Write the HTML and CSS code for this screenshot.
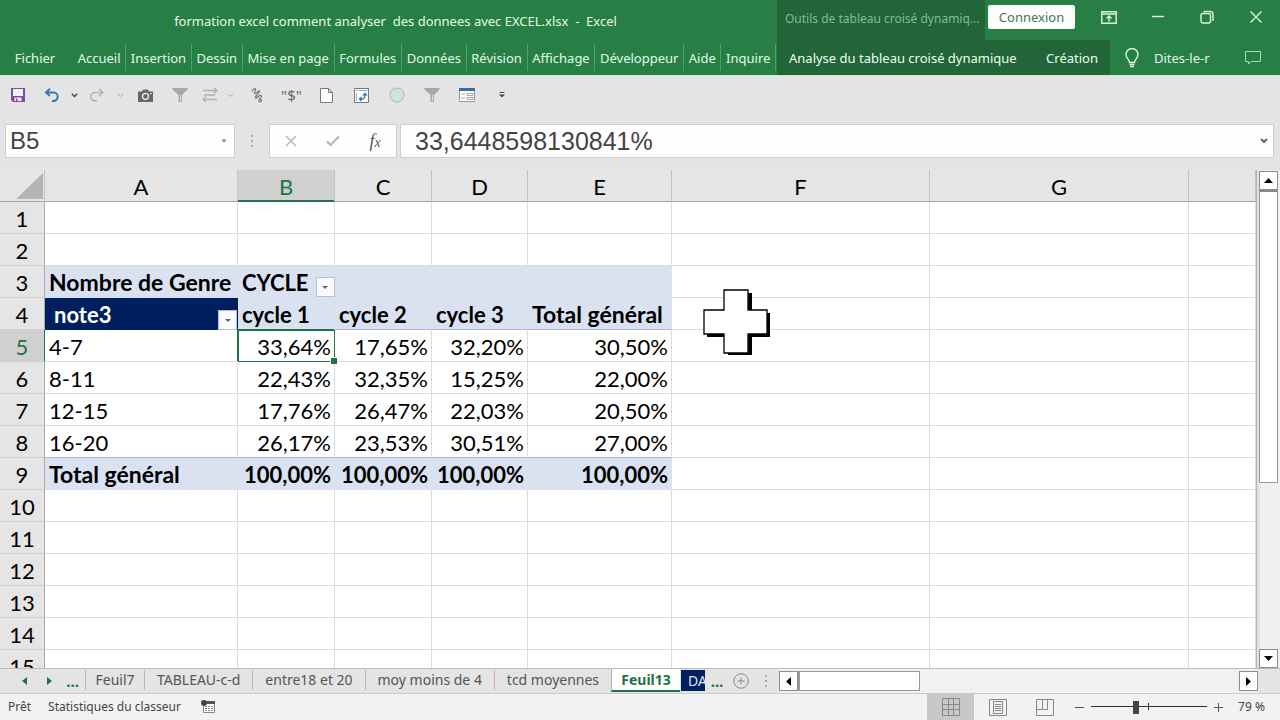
FILE: index.html
```
<!DOCTYPE html>
<html lang="fr">
<head>
<meta charset="utf-8">
<meta name="viewport" content="width=device-width, initial-scale=1">
<title>formation excel comment analyser des donnees avec EXCEL.xlsx - Excel</title>
<link rel="stylesheet" href="styles.css">
</head>
<body>
<header class="titlebar">
  <h1 class="doc-title">formation excel comment analyser&nbsp; des donnees avec EXCEL.xlsx&nbsp; -&nbsp; Excel</h1>
  <div class="context-title">Outils de tableau croisé dynamiq...</div>
  <div class="window-tools">
    <button class="signin">Connexion</button>
    <button class="win-btn" aria-label="Options d'affichage du ruban"><svg width="16" height="13" viewBox="0 0 16 13"><path d="M.8.800h14.400v11.400H.8zM.8 3h14.400M8 10.500V5.500M5.500 7.500 8 5l2.500 2.500"/></svg></button>
    <button class="win-btn" aria-label="Réduire"><svg width="14" height="14" viewBox="0 0 14 14"><path d="M1 6.500h12"/></svg></button>
    <button class="win-btn" aria-label="Restaurer"><svg width="14" height="14" viewBox="0 0 14 14"><rect x="1" y="3.500" width="9.500" height="9.500" rx="2"/><path d="M3.500 1.500h6.500q3 0 3 3V11"/></svg></button>
    <button class="win-btn" aria-label="Fermer"><svg width="14" height="14" viewBox="0 0 14 14"><path d="M1.500 1.500l11 11M12.500 1.500l-11 11"/></svg></button>
  </div>
</header>
<nav class="ribbon" aria-label="Ruban">
  <button class="file-tab">Fichier</button>
  <div class="tabs">
    <button class="tab">Accueil</button><button class="tab">Insertion</button><button class="tab">Dessin</button><button class="tab">Mise en page</button><button class="tab">Formules</button><button class="tab">Données</button><button class="tab">Révision</button><button class="tab">Affichage</button><button class="tab">Développeur</button><button class="tab">Aide</button><button class="tab">Inquire</button>
  </div>
  <div class="context-tabs"><button>Analyse du tableau croisé dynamique</button><button>Création</button></div>
  <div class="ribbon-tools">
    <button class="tell-me"><svg width="16" height="20" viewBox="0 0 16 20"><path d="M5.500 14.500c0-3-3.500-4-3.500-8a6 6 0 0 1 12 0c0 4-3.500 5-3.500 8zM5.500 16.500h5M6 18.500h4"/></svg><span>Dites-le-r</span></button>
    <button class="comment" aria-label="Commentaires"><svg width="16" height="14" viewBox="0 0 16 14"><path d="M.5.5h15v10H6.500L3.500 13v-2.500h-3z"/></svg></button>
  </div>
</nav>
<div class="quick" role="toolbar" aria-label="Accès rapide">
  <button class="q save" aria-label="Enregistrer"><svg width="14" height="14" viewBox="0 0 14 14"><path fill="#7a4fa0" d="M0 0h14v14H2L0 12z"/><path fill="#f4f0f8" d="M2 1h10v7H2zM3.500 9.500h7V13h-7z"/><path fill="#7a4fa0" d="M5 10.500h1.500V13H5z"/></svg></button>
  <button class="q undo" aria-label="Annuler"><svg width="16" height="14" viewBox="0 0 16 14"><path fill="none" stroke="#3c78b4" stroke-width="2" d="M6 .8 2 4.500 6 8M2 4.500h7.500a4.200 4.200 0 0 1 0 8.400H8"/></svg></button>
  <button class="q drop" aria-label="Liste annuler"><svg width="7" height="5" viewBox="0 0 7 5"><path fill="none" stroke="#444" stroke-width="1.300" d="M.8.800 3.500 3.500 6.200.8"/></svg></button>
  <button class="q redo" aria-label="Rétablir"><svg width="16" height="14" viewBox="0 0 16 14"><path fill="none" stroke="#b5b5b5" stroke-width="1.600" d="M10 .8 14 4.500 10 8M14 4.500H6a4.200 4.200 0 0 0 0 8.400h2"/></svg></button>
  <button class="q drop" aria-label="Liste rétablir"><svg width="7" height="5" viewBox="0 0 7 5"><path fill="none" stroke="#aaa" d="M.8.800 3.500 3.500 6.200.8"/></svg></button>
  <button class="q camera" aria-label="Appareil photo"><svg width="15" height="13" viewBox="0 0 15 13"><path fill="#666" d="M0 2.500h4L5 .5h5l1 2h4V13H0z"/><circle cx="7.500" cy="7.300" r="3" fill="#666" stroke="#eee" stroke-width="1.300"/><path fill="#eee" d="M12 4h1.500v1.200H12z"/></svg></button>
  <button class="q funnel" aria-label="Filtrer"><svg width="16" height="14" viewBox="0 0 16 14"><path fill="#a8a8a8" d="M.5 0h15v1.500L10 7v7H6.500V7L.5 1.500z"/><path fill="#ddd" d="M8 7h1v6H8z"/></svg></button>
  <button class="q swap" aria-label="Échanger"><svg width="18" height="16" viewBox="0 0 18 16"><path fill="none" stroke="#b0b0b0" stroke-width="1.300" d="M2 3.500h14M13 .8l3 2.700-3 2.700M3 8h11M16 12.500H2M5 9.800l-3 2.700 3 2.700"/></svg></button>
  <button class="q drop" aria-label="Liste échanger"><svg width="7" height="5" viewBox="0 0 7 5"><path fill="none" stroke="#aaa" d="M.8.800 3.500 3.500 6.200.8"/></svg></button>
  <button class="q draw" aria-label="Dessiner"><svg width="12" height="16" viewBox="0 0 12 16"><path fill="none" stroke="#777" stroke-width="1.200" d="M1 4.500C2 2 4.500.5 4.500 2.500S2.500 6 4 6.500 7.500 3 8.500 4 5 8.500 4.500 10s1.500 1 3-.5 3-1.500 3 0-3 3-2.500 4.500 2.500.5 2.500-.5-1.500-1.500-3-1"/></svg></button>
  <button class="q money" aria-label="Format monétaire">"$"</button>
  <button class="q" aria-label="Nouveau"><svg width="13" height="15" viewBox="0 0 13 15"><path fill="#fff" stroke="#777" d="M.5.500h8l4 4v10H.5zM8.500.5v4h4"/></svg></button>
  <button class="q" aria-label="Actualiser le tableau"><svg width="15" height="15" viewBox="0 0 15 15"><path fill="#fff" stroke="#777" d="M.5.500h14v14H.5z"/><path fill="#9aa" d="M2 2h2v1H2zM5 2h8v1H5zM2 5h1v8H2z"/><path fill="none" stroke="#3c78b4" stroke-width="1.400" d="M5.500 11h3q2.500 0 2.500-5M9 7.500l2-2 2 2M7.500 9l-2 2 2 2"/></svg></button>
  <button class="q" aria-label="Ellipse"><svg width="16" height="16" viewBox="0 0 16 16"><circle cx="8" cy="8" r="7" fill="#cfe3da" stroke="#9fbfb2"/></svg></button>
  <button class="q" aria-label="Effacer le filtre"><svg width="16" height="14" viewBox="0 0 16 14"><path fill="#a8a8a8" d="M.5 0h15v1.500L10 7v7H6.500V7L.5 1.500z"/><path fill="#ddd" d="M8 7h1v6H8z"/></svg></button>
  <button class="q" aria-label="Formulaire"><svg width="16" height="14" viewBox="0 0 16 14"><path fill="#fff" stroke="#999" d="M.5.500h15v13H.5z"/><path fill="#3c6ea5" d="M0 0h16v3H0z"/><path fill="none" stroke="#aaa" d="M2 6h4M8 5.500h6v2H8zM2 10h4M8 9.500h6v2H8z"/></svg></button>
  <button class="q" aria-label="Personnaliser"><svg width="6" height="6" viewBox="0 0 6 6"><path fill="#444" d="M.5 0h5v1h-5zM0 2.500h6L3 5.500z"/></svg></button>
</div>
<div class="formula-row">
  <div class="name-box"><input value="B5" aria-label="Zone Nom"><svg width="6" height="4" viewBox="0 0 6 4"><path fill="#777" d="M.5.500h5L3 3.500z"/></svg></div>
  <svg class="grip" width="4" height="14" viewBox="0 0 4 14"><path fill="#aaa" d="M1 1h2v2H1zM1 6h2v2H1zM1 11h2v2H1z"/></svg>
  <div class="fx-box">
    <button aria-label="Annuler la saisie"><svg width="12" height="12" viewBox="0 0 12 12"><path fill="none" stroke="#b8b8b8" stroke-width="1.500" d="M1 1l10 10M11 1 1 11"/></svg></button>
    <button aria-label="Entrer"><svg width="14" height="12" viewBox="0 0 14 12"><path fill="none" stroke="#b8b8b8" stroke-width="2.200" d="M1 6.500 4.500 10 13 1.500"/></svg></button>
    <button class="fx" aria-label="Insérer une fonction">f<small>x</small></button>
  </div>
  <div class="formula-box"><input value="33,6448598130841%" aria-label="Barre de formule"><button aria-label="Développer"><svg width="8" height="6" viewBox="0 0 8 6"><path fill="none" stroke="#666" stroke-width="2" d="M1 1l3 3 3-3"/></svg></button></div>
</div>
<main class="workbook">
  <div class="sheet">
    <table class="grid">
      <colgroup><col class="c-num"><col class="c-a"><col class="c-b"><col class="c-b"><col class="c-d"><col class="c-e"><col class="c-f"><col class="c-g"><col></colgroup>
      <thead><tr><th class="corner" aria-label="Tout sélectionner"><svg width="27" height="26" viewBox="0 0 27 26"><path fill="#b4b4b4" d="M27 0v26H0z"/></svg></th><th>A</th><th class="on">B</th><th>C</th><th>D</th><th>E</th><th>F</th><th>G</th><th></th></tr></thead>
      <tbody>
        <tr><th>1</th><td></td><td></td><td></td><td></td><td></td><td></td><td></td><td></td></tr>
        <tr><th>2</th><td></td><td></td><td></td><td></td><td></td><td></td><td></td><td></td></tr>
        <tr class="band"><th>3</th><td class="p label">Nombre de Genre</td><td class="p" colspan="2"><span class="with-filter">CYCLE<button class="filter cycle" aria-label="Filtrer CYCLE"></button></span></td><td class="p"></td><td class="p"></td><td></td><td></td><td></td></tr>
        <tr class="band rule"><th>4</th><td class="p navy">note3<button class="filter note" aria-label="Filtrer note3"></button></td><td class="p">cycle 1</td><td class="p">cycle 2</td><td class="p">cycle 3</td><td class="p label">Total général</td><td></td><td></td><td></td></tr>
        <tr><th class="on">5</th><td>4-7</td><td class="n active">33,64%</td><td class="n">17,65%</td><td class="n">32,20%</td><td class="n">30,50%</td><td></td><td></td><td></td></tr>
        <tr><th>6</th><td>8-11</td><td class="n">22,43%</td><td class="n">32,35%</td><td class="n">15,25%</td><td class="n">22,00%</td><td></td><td></td><td></td></tr>
        <tr><th>7</th><td>12-15</td><td class="n">17,76%</td><td class="n">26,47%</td><td class="n">22,03%</td><td class="n">20,50%</td><td></td><td></td><td></td></tr>
        <tr class="last"><th>8</th><td>16-20</td><td class="n">26,17%</td><td class="n">23,53%</td><td class="n">30,51%</td><td class="n">27,00%</td><td></td><td></td><td></td></tr>
        <tr class="band"><th>9</th><td class="p label">Total général</td><td class="p n">100,00%</td><td class="p n">100,00%</td><td class="p n">100,00%</td><td class="p n">100,00%</td><td></td><td></td><td></td></tr>
        <tr><th>10</th><td></td><td></td><td></td><td></td><td></td><td></td><td></td><td></td></tr>
        <tr><th>11</th><td></td><td></td><td></td><td></td><td></td><td></td><td></td><td></td></tr>
        <tr><th>12</th><td></td><td></td><td></td><td></td><td></td><td></td><td></td><td></td></tr>
        <tr><th>13</th><td></td><td></td><td></td><td></td><td></td><td></td><td></td><td></td></tr>
        <tr><th>14</th><td></td><td></td><td></td><td></td><td></td><td></td><td></td><td></td></tr>
        <tr><th>15</th><td></td><td></td><td></td><td></td><td></td><td></td><td></td><td></td></tr>
      </tbody>
    </table>
    <svg class="pointer" width="68" height="68" viewBox="0 0 68 68"><path fill="#000" d="M25 4h24v20h18v24H49v18H25V48H4V24h21z"/><path fill="#fff" stroke="#000" stroke-width="1.300" d="M21 1h24v20h19v24H45v19H21V45H1V21h20z"/></svg>
  </div>
  <div class="vscroll">
    <button aria-label="Défiler vers le haut"><svg width="9" height="5" viewBox="0 0 9 5"><path d="M4.500 0 9 5H0z"/></svg></button>
    <div class="vthumb"></div>
    <button class="down" aria-label="Défiler vers le bas"><svg width="9" height="5" viewBox="0 0 9 5"><path d="M4.500 5 9 0H0z"/></svg></button>
  </div>
</main>
<div class="sheetbar">
  <div class="sheet-nav">
    <button aria-label="Feuille précédente"><svg width="5" height="8" viewBox="0 0 5 8"><path d="M5 0v8L0 4z"/></svg></button>
    <button aria-label="Feuille suivante"><svg width="5" height="8" viewBox="0 0 5 8"><path d="M0 0v8l5-4z"/></svg></button>
    <button class="dots">...</button>
  </div>
  <div class="sheet-tabs">
    <button class="short">Feuil7</button><button>TABLEAU-c-d</button><button>entre18 et 20</button><button>moy moins de 4</button><button>tcd moyennes</button><button class="current">Feuil13</button><button class="cut">DA</button>
  </div>
  <button class="dots more">...</button>
  <button class="add" aria-label="Nouvelle feuille"><svg width="16" height="16" viewBox="0 0 16 16"><path fill="none" stroke="#888" d="M8 .8a7.200 7.200 0 1 0 .1 0M8 4.500v7M4.500 8h7"/></svg></button>
  <svg class="grip" width="4" height="14" viewBox="0 0 4 14"><path fill="#aaa" d="M1 1h2v2H1zM1 6h2v2H1zM1 11h2v2H1z"/></svg>
  <div class="hscroll">
    <button aria-label="Défiler à gauche"><svg width="5" height="9" viewBox="0 0 5 9"><path d="M5 0v9L0 4.500z"/></svg></button>
    <div class="hthumb"></div>
    <button class="right" aria-label="Défiler à droite"><svg width="5" height="9" viewBox="0 0 5 9"><path d="M0 0v9l5-4.500z"/></svg></button>
  </div>
</div>
<footer class="status">
  <span>Prêt</span>
  <button class="stats">Statistiques du classeur</button>
  <button class="macro" aria-label="Enregistrer une macro"><svg width="14" height="14" viewBox="0 0 14 14"><path fill="#fff" stroke="#888" d="M2.500 2.500h11v10h-11z"/><path fill="#555" d="M5 1h9v3H5z"/><path fill="none" stroke="#888" d="M4 6.500h8M4 8.500h8M4 10.500h8" stroke-dasharray="2 1"/><circle cx="3" cy="3" r="3" fill="#444"/></svg></button>
  <div class="views">
    <button class="view on" aria-label="Normal"><svg width="18" height="18" viewBox="0 0 18 18"><path d="M.5.500h17v17H.5zM6.500.500v17M11.500.500v17M.5 6.500h17M.5 11.500h17"/></svg></button>
    <button class="view" aria-label="Mise en page"><svg width="18" height="17" viewBox="0 0 18 17"><path d="M.5.500h17v16H.5zM4.500 2.500h9v12h-9zM6 5.500h6M6 7.500h6M6 9.500h6M6 11.500h6"/></svg></button>
    <button class="view" aria-label="Aperçu des sauts de page"><svg width="18" height="17" viewBox="0 0 18 17"><path d="M.5.500h17v16H.5zM.5 10.500h11V.500M6.500.500v10"/></svg></button>
  </div>
  <div class="zoom">
    <button aria-label="Zoom arrière"><svg width="9" height="9" viewBox="0 0 9 9"><path d="M0 4.500h9"/></svg></button>
    <div class="slider"><input type="range" min="0" max="100" value="38" aria-label="Zoom"></div>
    <button aria-label="Zoom avant"><svg width="9" height="9" viewBox="0 0 9 9"><path d="M0 4.500h9M4.500 0v9"/></svg></button>
    <button class="percent">79 %</button>
  </div>
</footer>
</body>
</html>
```
FILE: styles.css
```
* { box-sizing: border-box; }
body {
  margin: 0;
  height: 100vh;
  display: flex;
  flex-direction: column;
  overflow: hidden;
  background: #e4e4e4;
  color: #333;
  font: 13px/20px "Noto Sans", "Open Sans", sans-serif;
}
button, input { font: inherit; color: inherit; background: none; border: 0; padding: 0; margin: 0; }
button { display: flex; align-items: center; justify-content: center; white-space: nowrap; flex: none; }
input { min-width: 0; outline: 0; }
svg { display: block; flex: none; }

/* Title bar and ribbon */
.titlebar, .ribbon { display: flex; flex: none; background: #287f46; color: #e2fae6; }
.titlebar { height: 40px; }
.doc-title { flex: 1; margin: 0; padding: 11px 0 0 14px; font-size: 13px; font-weight: 400; text-align: center; white-space: nowrap; }
.context-title { width: 208px; padding: 9px 0 0 8px; background: #216538; color: #86bb93; font-size: 12px; white-space: nowrap; overflow: hidden; }
.window-tools { width: 295px; display: flex; align-items: flex-start; padding: 5px 0 0 3px; }
.signin { width: 87px; height: 24px; border-radius: 2px; background: #fdfffd; color: #3f7a57; }
.win-btn { width: 49px; height: 24px; }
.signin + .win-btn { margin-left: 9px; }
.win-btn svg, .ribbon-tools svg { fill: none; stroke: #d8f7de; stroke-width: 1.4; }
.ribbon-tools .comment svg { stroke: #a5dcb2; stroke-width: 1; }
.ribbon { height: 36px; border-bottom: 1px solid #c9ecd2; }
.file-tab { width: 70px; }
.tabs { flex: 1; display: flex; padding: 4px 1px 4px 0; }
.tab { flex: 1 1 auto; border-right: 1px solid #4fa168; }
.tab:first-child { padding-left: 3px; }
.context-tabs { width: 333px; display: flex; justify-content: space-between; padding: 0 12px 0 12px; background: #216538; color: #f0fff2; }
.ribbon-tools { width: 170px; display: flex; justify-content: space-between; padding: 0 19px 0 14px; }
.tell-me { gap: 14px; }

/* Quick access toolbar */
.quick { flex: none; display: flex; align-items: center; height: 38px; padding-left: 6px; }
.q { width: 35px; height: 24px; }
.save { width: 24px; }
.undo { width: 36px; margin-left: 4px; }
.drop { width: 8px; }
.redo { width: 38px; }
.camera { width: 42px; }
.funnel { width: 28px; }
.swap { width: 32px; }
.draw { margin-left: 5px; }
.money { font-size: 15px; color: #666; }

/* Formula bar */
.formula-row { flex: none; display: flex; align-items: center; height: 56px; padding: 0 6px 2px 5px; }
.name-box, .fx-box, .formula-box { display: flex; align-items: center; height: 34px; background: #fefefe; border: 1px solid #cfcfcf; }
.name-box { width: 230px; padding: 0 7px 0 4px; }
.name-box input, .formula-box input { flex: 1; height: 32px; font: 25px/32px "Liberation Sans", Arial, sans-serif; color: #444; }
.name-box input { font-size: 24px; }
.formula-row .grip { margin: 0 15px; }
.fx-box { width: 128px; justify-content: space-around; margin-right: 3px; }
.fx-box button { width: 30px; height: 30px; }
.fx { font: italic 18px/24px "Liberation Serif", serif; color: #555; }
.fx small { font-size: 14px; padding-top: 4px; }
.formula-box { flex: 1; padding: 0 5px 0 14px; }

/* Worksheet */
.workbook { flex: 1; min-height: 0; display: flex; }
.sheet { flex: 1; min-width: 0; position: relative; overflow: hidden; border-right: 1px solid #b5b5b5; }
.grid { width: 100%; table-layout: fixed; border-collapse: separate; border-spacing: 0; background: #fff; color: #000; font: 22px/29px Lato, Carlito, sans-serif; }
.c-num { width: 45px; }
.c-a { width: 193px; }
.c-b { width: 97px; }
.c-d { width: 96px; }
.c-e { width: 144px; }
.c-f { width: 258px; }
.c-g { width: 259px; }
.grid th, .grid td { height: 32px; padding: 2px 3px 0 4px; border: 0 solid #dcdcdc; border-width: 0 1px 1px 0; white-space: nowrap; text-align: left; }
.grid th { padding: 2px 0 0; background: #e5e5e5; border-color: #c4c4c4; font-weight: 400; text-align: center; }
.grid thead th { border-bottom-color: #a8a8a8; }
.grid tbody th { border-right-color: #a8a8a8; border-bottom-color: #d0d0d0; }
.grid th.on { background: #d0d0d0; color: #217346; }
.grid thead th.on { border-bottom-color: #217346; box-shadow: inset 0 -1px #217346; }
.grid tbody th.on { border-right-color: #217346; }
.grid .corner { padding: 0; }
.corner svg { margin-left: 16px; }
.grid .n { text-align: right; }
.grid .p { background: #dae1f0; border-color: #dae1f0; font-weight: 700; }
.grid .label { font-size: 23px; }
.rule .p, .last td:nth-child(-n+6) { border-bottom-color: #a9b8d4; }
.grid .navy { position: relative; padding-left: 9px; background: #001f5f; border-color: #001f5f; color: #fff; }
.grid .active { position: relative; outline: 1px solid #217346; outline-offset: -1px; box-shadow: -1px -1px #217346; }
.active::after { content: ""; position: absolute; right: -3px; bottom: -3px; width: 6px; height: 6px; background: #217346; border: 1px solid #fff; border-width: 1px 0 0 1px; }
.with-filter { display: flex; gap: 7px; height: 29px; }
.filter { width: 19px; height: 20px; background: #f8fafd; border: 1px solid #b8c0cc; }
.filter::after { content: ""; border: 3px solid transparent; border-top: 3px solid #666; border-bottom: 0; }
.cycle { align-self: flex-end; }
.note { position: absolute; right: 0; bottom: -1px; }
.pointer { position: absolute; left: 703px; top: 119px; }
.vscroll { width: 23px; display: flex; flex-direction: column; align-items: center; padding-top: 1px; background: linear-gradient(90deg, #dedede, #f0f0f0 20%); }
.vscroll button, .hscroll button { width: 19px; height: 19px; background: #fff; border: 1px solid #8c8c8c; }
.vthumb { width: 19px; height: 293px; background: #fff; border: 1px solid #999; border-top: 2px solid #888; }
.vscroll .down { margin-top: auto; }

/* Sheet tabs */
.sheetbar { flex: none; display: flex; align-items: center; height: 26px; border-top: 1px solid #bcbcbc; border-bottom: 1px solid #cacaca; font-size: 14px; color: #555; }
.sheet-nav { width: 85px; display: flex; justify-content: flex-end; align-items: center; gap: 20px; padding-right: 6px; fill: #217346; }
.sheet-nav .dots { margin-left: -6px; }
.dots { font-weight: 700; color: #217346; }
.sheet-nav .dots, .more { font-size: 15px; }
.sheet-tabs { width: 620px; display: flex; align-self: stretch; }
.sheet-tabs button { flex: 1 1 auto; height: 20px; margin-top: 1px; border-left: 1px solid #b5b5b5; }
.sheet-tabs .short { flex: none; width: 59px; }
.sheet-tabs .current { flex: none; width: 69px; height: 23px; margin-top: 0; background: #fff; border-bottom: 2px solid #217346; color: #217346; font-weight: 700; }
.sheet-tabs .cut { flex: none; width: 24px; height: 21px; margin-left: 1px; padding-left: 7px; justify-content: flex-start; overflow: hidden; background: #001f5f; color: #dfe6f3; border: 0; }
.more { width: 24px; }
.add { width: 24px; }
.sheetbar .grip { margin: 0 11px; }
.hscroll { flex: 1; display: flex; align-items: center; align-self: stretch; margin-right: 22px; background: #f1f1f1; }
.hscroll button { height: 20px; }
.hthumb { width: 122px; height: 20px; background: #fff; border: 1px solid #999; border-left: 2px solid #999; }
.hscroll .right { margin-left: auto; }

/* Status bar */
.status { flex: none; display: flex; align-items: center; height: 26px; padding-left: 8px; background: #f2f2f2; font-size: 12px; color: #444; }
.stats { margin-left: 17px; }
.macro { margin-left: 20px; }
.views { display: flex; margin-left: auto; }
.view { width: 47px; height: 26px; }
.view svg, .zoom svg { fill: none; stroke: #888; }
.view.on { background: #c8c8c8; }
.zoom { display: flex; align-items: center; padding-left: 7px; }
.zoom svg { stroke: #555; }
.slider { width: 116px; height: 20px; margin: 0 7px; background: linear-gradient(#333, #333) 57px 6px / 1px 7px no-repeat, linear-gradient(#333, #333) 0 9px / 100% 1px no-repeat; }
.slider input { display: block; width: 100%; height: 20px; appearance: none; }
.slider input::-webkit-slider-thumb { appearance: none; width: 6px; height: 13px; background: #444; }
.percent { width: 57px; }
```
